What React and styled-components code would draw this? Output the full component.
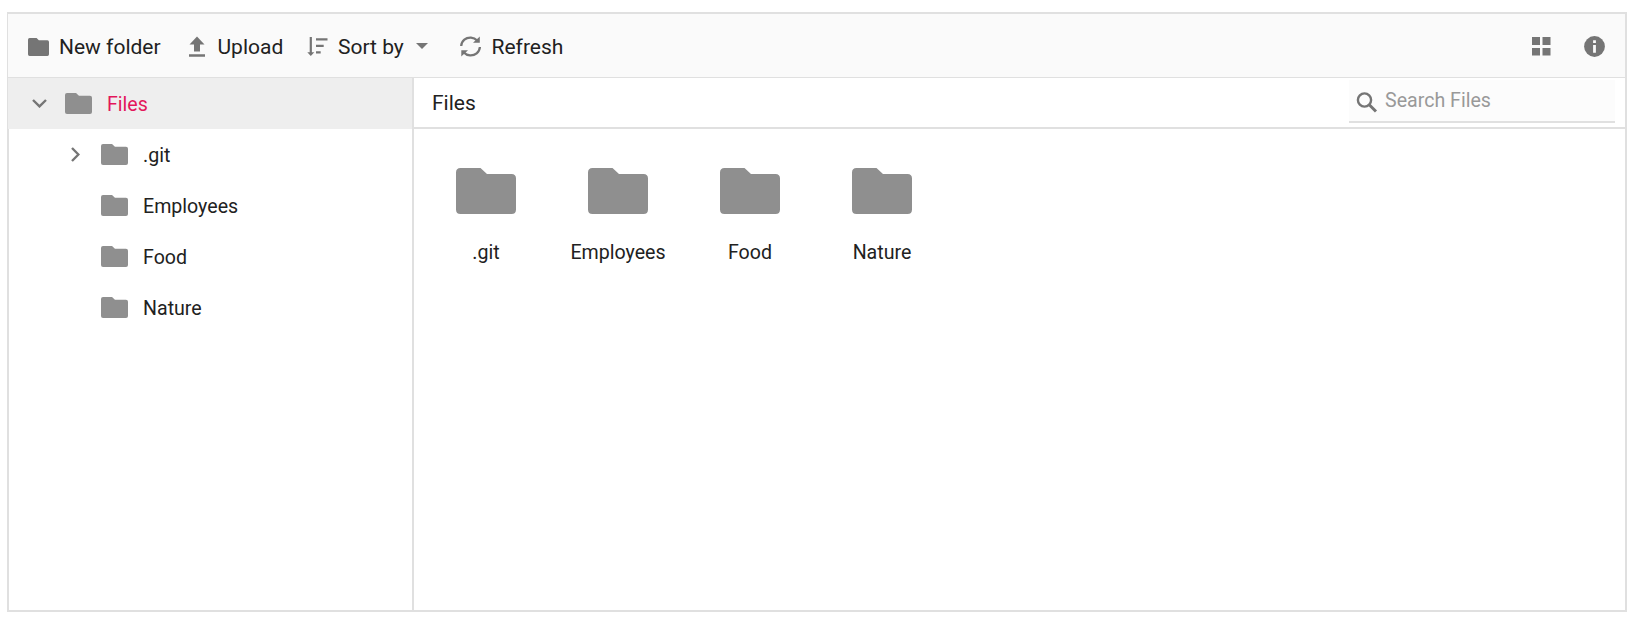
import React from "react";
import styled, { createGlobalStyle } from "styled-components";

const Global = createGlobalStyle`
  * { box-sizing: border-box; }
  body { margin: 0; background: #fff; }
  button, input { font: inherit; border: 0; background: none; padding: 0; margin: 0; outline: 0; }
`;

const Manager = styled.main`
  width: 1620px;
  height: 600px;
  margin: 12px 0 0 7px;
  border: 2px solid #e0e0e0;
  display: flex;
  flex-direction: column;
  font-family: Roboto, "Liberation Sans", sans-serif;
  font-size: 19.6px;
  color: #212121;
  background: #fff;
`;

const Toolbar = styled.header`
  flex: 0 0 64px;
  margin-left: -1px;
  background: #fafafa;
  border-bottom: 1px solid #e0e0e0;
  display: flex;
  justify-content: space-between;
  padding: 3px 19px 0 19.5px;
  font-size: 21px;
`;

const ToolGroup = styled.div`
  display: flex;
  align-items: center;
  gap: ${(p) => p.$gap || 0}px;
`;

const ToolButton = styled.button`
  display: flex;
  align-items: center;
  width: ${(p) => p.$width}px;
  height: 46px;
  color: inherit;
  white-space: nowrap;
`;

const IconButton = styled.button`
  display: flex;
  width: 22px;
  height: 22px;
`;

const Icon = styled.svg`
  display: block;
  flex: none;
  margin-right: ${(p) => p.$after || 0}px;
  margin-left: ${(p) => p.$before || 0}px;
  color: ${(p) => p.$color || "#757575"};
`;

const Caret = styled(Icon)`
  margin-bottom: 2px;
`;

const Body = styled.div`
  flex: 1;
  display: flex;
  min-height: 0;
`;

const Tree = styled.nav`
  flex: 0 0 404px;
  margin-left: -1px;
`;

const TreeRow = styled.div`
  height: 51px;
  margin-left: ${(p) => (p.$selected ? 0 : 1)}px;
  padding-left: ${(p) => (p.$selected ? 57 : 92)}px;
  background: ${(p) => (p.$selected ? "#eee" : "transparent")};
  color: ${(p) => (p.$selected ? "#e3165b" : "inherit")};
  display: flex;
  align-items: center;
`;

const TreeLabel = styled.span`
  line-height: 24px;
  padding-top: 2px;
`;

const Toggle = styled.span`
  display: flex;
  justify-content: center;
  width: 20px;
  margin-left: -36px;
  margin-right: 16px;
`;

const Content = styled.section`
  flex: 1;
  border-left: 2px solid #e0e0e0;
`;

const AddressBar = styled.div`
  height: 51px;
  border-bottom: 2px solid #e0e0e0;
  display: flex;
  justify-content: space-between;
  padding: 2px 10px 0 18px;
`;

const Crumb = styled.span`
  font-size: 21px;
  line-height: 24px;
  padding-top: 11px;
`;

const SearchBox = styled.label`
  width: 266px;
  height: 43px;
  background: #fcfcfc;
  border-bottom: 2px solid #e0e0e0;
  display: flex;
  align-items: flex-start;
  padding: 12px 0 0 7px;
`;

const SearchInput = styled.input`
  flex: 1;
  min-width: 0;
  height: 24px;
  margin-top: -4px;
  color: #212121;
  &::placeholder { color: #999; opacity: 1; }
`;

const Grid = styled.div`
  display: flex;
  padding: 39px 0 0 6px;
`;

const Tile = styled.div`
  width: 132px;
  display: flex;
  flex-direction: column;
  align-items: center;
  gap: 27px;
  line-height: 24px;
`;

function FolderIcon({ width, height, ...rest }) {
  return (
    <Icon width={width} height={height} viewBox="0 0 60 46" preserveAspectRatio="none" $color="#8f8f8f" {...rest}>
      <path fill="currentColor" d="M4.500 0H24.500L31 6H55.500Q60 6 60 10.500V41.500Q60 46 55.500 46H4.500Q0 46 0 41.500V4.500Q0 0 4.500 0Z" />
    </Icon>
  );
}

function UploadIcon() {
  return (
    <Icon width="16" height="22" viewBox="0 0 16 22" $after={13}>
      <path fill="currentColor" d="M8 .5 15.500 8.500H11V15.500H5V8.500H.5ZM0 18.300H16V20.800H0Z" />
    </Icon>
  );
}

function SortIcon() {
  return (
    <Icon width="22" height="22" viewBox="0 0 22 22" $after={9.5}>
      <path fill="currentColor" d="M2.700 1H4.900V16.200H7.300L3.800 20 .3 16.200H2.700ZM9 2.200H20.500V4.600H9ZM9 8.700H16.700V11.100H9ZM9 15.200H13.700V17.600H9Z" />
    </Icon>
  );
}

function RefreshIcon() {
  return (
    <Icon width="22" height="22" viewBox="0 0 22 22" $after={10}>
      <g transform="translate(-.5 -.5)">
        <g fill="none" stroke="currentColor" strokeWidth="2.300">
          <path d="M1.700 10.500C2 5 6.500 1.800 11.500 2.100C14 2.200 16 3.200 17.700 5" />
          <path d="M20.400 11.500C20 17 15.500 20.200 10.500 19.900C8 19.800 6 18.800 4.300 17" />
        </g>
        <path fill="currentColor" d="M20.300 1V7.300H13.500ZM1.800 21V14.700H8.500Z" />
      </g>
    </Icon>
  );
}

function Chevron({ open }) {
  return (
    <Icon width={open ? 15 : 9} height={open ? 9 : 15} viewBox={open ? "0 0 15 9" : "0 0 9 15"}>
      <path fill="none" stroke="currentColor" strokeWidth="2.400" d={open ? "M1 1 7.500 7.400 14 1" : "M1 1 7.400 7.500 1 14"} />
    </Icon>
  );
}

const folders = [
  { name: ".git", expandable: true },
  { name: "Employees" },
  { name: "Food" },
  { name: "Nature" },
];

export default function App() {
  return (
    <>
      <Global />
      <Manager>
        <Toolbar>
          <ToolGroup>
            <ToolButton $width={161}>
              <FolderIcon width={21} height={18} $color="#757575" $after={10.5} />
              New folder
            </ToolButton>
            <ToolButton $width={118}>
              <UploadIcon />
              Upload
            </ToolButton>
            <ToolButton $width={153}>
              <SortIcon />
              Sort by
              <Caret width="12" height="6" viewBox="0 0 12 6" $before={12}>
                <path fill="currentColor" d="M0 0H12L6 6Z" />
              </Caret>
            </ToolButton>
            <ToolButton $width={110}>
              <RefreshIcon />
              Refresh
            </ToolButton>
          </ToolGroup>
          <ToolGroup $gap={31}>
            <IconButton aria-label="View">
              <Icon width="22" height="22" viewBox="0 0 22 22">
                <path fill="currentColor" d="M1 1H9V9H1ZM11.500 1H19.500V9H11.500ZM1 12H9V19.500H1ZM11.500 12H19.500V19.500H11.500Z" />
              </Icon>
            </IconButton>
            <IconButton aria-label="Details">
              <Icon width="22" height="22" viewBox="0 0 22 22">
                <circle cx="10.500" cy="10.500" r="10.400" fill="currentColor" />
                <path fill="#fafafa" d="M9.100 4.300H11.900V6.900H9.100ZM9.100 8.900H11.900V16.700H9.100Z" />
              </Icon>
            </IconButton>
          </ToolGroup>
        </Toolbar>
        <Body>
          <Tree>
            <TreeRow $selected>
              <Toggle>
                <Chevron open />
              </Toggle>
              <FolderIcon width={27} height={21} $after={15} />
              <TreeLabel>Files</TreeLabel>
            </TreeRow>
            {folders.map((f) => (
              <TreeRow key={f.name}>
                <Toggle>{f.expandable && <Chevron />}</Toggle>
                <FolderIcon width={27} height={21} $after={15} />
                <TreeLabel>{f.name}</TreeLabel>
              </TreeRow>
            ))}
          </Tree>
          <Content>
            <AddressBar>
              <Crumb>Files</Crumb>
              <SearchBox>
                <Icon width="22" height="22" viewBox="0 0 22 22" $after={7}>
                  <circle cx="8.500" cy="8" r="6.600" fill="none" stroke="currentColor" strokeWidth="2.400" />
                  <path d="M13 12.500 20 19.500" stroke="currentColor" strokeWidth="3" />
                </Icon>
                <SearchInput placeholder="Search Files" />
              </SearchBox>
            </AddressBar>
            <Grid>
              {folders.map((f) => (
                <Tile key={f.name}>
                  <FolderIcon width={60} height={46} />
                  {f.name}
                </Tile>
              ))}
            </Grid>
          </Content>
        </Body>
      </Manager>
    </>
  );
}
